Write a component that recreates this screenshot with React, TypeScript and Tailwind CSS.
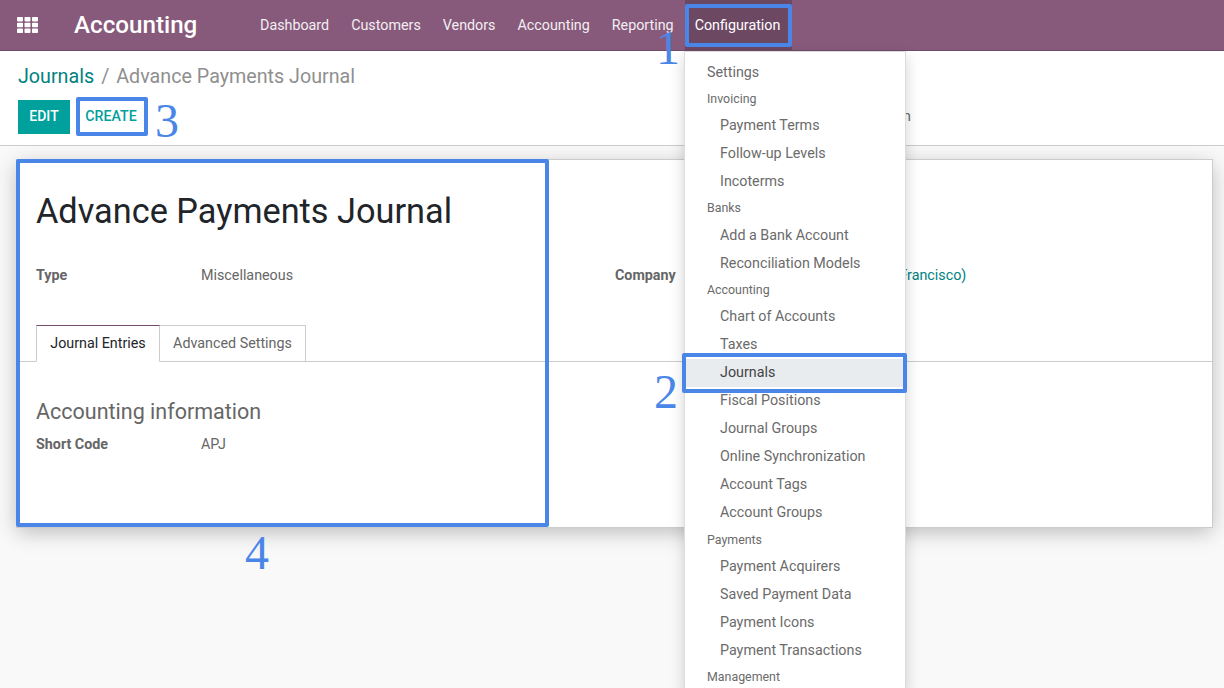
import React from "react";

const navItems = ["Dashboard", "Customers", "Vendors", "Accounting", "Reporting"];

type Row = { label: string; header?: boolean; active?: boolean; top?: boolean };
const rows: Row[] = [
  { label: "Settings", top: true },
  { label: "Invoicing", header: true },
  { label: "Payment Terms" },
  { label: "Follow-up Levels" },
  { label: "Incoterms" },
  { label: "Banks", header: true },
  { label: "Add a Bank Account" },
  { label: "Reconciliation Models" },
  { label: "Accounting", header: true },
  { label: "Chart of Accounts" },
  { label: "Taxes" },
  { label: "Journals", active: true },
  { label: "Fiscal Positions" },
  { label: "Journal Groups" },
  { label: "Online Synchronization" },
  { label: "Account Tags" },
  { label: "Account Groups" },
  { label: "Payments", header: true },
  { label: "Payment Acquirers" },
  { label: "Saved Payment Data" },
  { label: "Payment Icons" },
  { label: "Payment Transactions" },
  { label: "Management", header: true },
];

function AppsIcon() {
  const xs = [0, 7.5, 15];
  const ys = [0, 5.8, 11.6];
  return (
    <svg width="21" height="16" viewBox="0 0 21 16" className="block">
      {ys.map((y) =>
        xs.map((x) => <rect key={`${x}-${y}`} x={x} y={y} width="6" height="4.4" rx="0.8" fill="#ffffff" />)
      )}
    </svg>
  );
}

export default function App() {
  return (
    <div className="relative h-[688px] w-[1224px] overflow-hidden bg-[#f9f9f9] font-['Roboto',sans-serif] text-[14.3px] text-[#666666]">
      {/* Top navigation */}
      <header className="flex h-[51px] items-center border-b border-[#714b67] bg-[#875a7b] text-white">
        <div className="ml-[17px] w-[57px]">
          <AppsIcon />
        </div>
        <div className="w-[175px] pt-[1px] text-[24.2px] font-medium leading-none">Accounting</div>
        <nav className="flex h-full">
          {navItems.map((n) => (
            <div key={n} className="flex h-full items-center px-[11px] pt-[1px] text-[#f3eef2]">
              {n}
            </div>
          ))}
          <div className="flex h-full w-[107px] items-center bg-[#6d4863] pl-[10px] pt-[1px]">Configuration</div>
        </nav>
      </header>

      {/* Control panel */}
      <section className="relative h-[95px] border-b border-[#cccccc] bg-white pl-[18px]">
        <div className="flex h-[49px] items-center pt-[2px] text-[19.7px] leading-none">
          <span className="text-[#00827f]">Journals</span>
          <span className="mx-[7px] text-[#8f8f8f]">/</span>
          <span className="text-[#8f8f8f]">Advance Payments Journal</span>
        </div>
        <div className="flex">
          <button className="flex h-[34px] w-[52px] items-center justify-center bg-[#00a09d] pb-[1px] text-[14px] font-medium text-white">
            EDIT
          </button>
          <button className="ml-[6px] flex h-[34px] w-[70px] items-center justify-center pb-[1px] text-[14.2px] font-medium text-[#00a09d]">
            CREATE
          </button>
          <span className="ml-[724px] self-center text-[#666666]">Action</span>
        </div>
      </section>

      {/* Form sheet */}
      <main className="ml-[16px] mr-[11px] mt-[13px] h-[369px] border border-[#cccccc] bg-white shadow-[0_5px_20px_-1px_rgba(0,0,0,0.25)]">
        <h1 className="ml-[19px] mt-[28px] text-[34.3px] font-normal leading-[46px] text-[#212529]">
          Advance Payments Journal
        </h1>
        <div className="ml-[19px] mt-[31px] flex h-[22px] items-center">
          <span className="w-[165px] font-bold">Type</span>
          <span className="w-[414px]">Miscellaneous</span>
          <span className="w-[165px] font-bold">Company</span>
          <span className="text-[#00827f]">My Company (San Francisco)</span>
        </div>
        <div className="mt-[38px] flex h-[37px] border-b border-[#cccccc] pl-[19px]">
          <div className="flex h-[37px] w-[124px] items-center justify-center border-x border-b border-t border-x-[#cccccc] border-b-white border-t-[#714b67] bg-white text-[#212529]">
            Journal Entries
          </div>
          <div className="flex h-[37px] w-[146px] items-center justify-center border-y border-r border-[#cccccc] border-b-[#cccccc]">
            Advanced Settings
          </div>
        </div>
        <h2 className="ml-[19px] mt-[35px] text-[21.5px] font-normal leading-[30px]">Accounting information</h2>
        <div className="ml-[19px] mt-[7px] flex h-[22px] items-center">
          <span className="w-[165px] font-bold">Short Code</span>
          <span>APJ</span>
        </div>
      </main>

      {/* Dropdown menu */}
      <div className="absolute left-[684px] top-[51px] w-[222px] border border-[#dcdcdc] bg-white pt-[6.5px] text-[#6b6b6b] shadow-[0_6px_14px_rgba(0,0,0,0.18)]">
        {rows.map((r) =>
          r.header ? (
            <div
              key={r.label}
              className={`flex h-[25.5px] items-center pl-[22px] text-[12.4px] ${r.label === "Payments" ? "pt-[0.4px]" : ""}`}
            >
              {r.label}
            </div>
          ) : (
            <div
              key={r.label}
              className={`flex h-[28px] items-center ${r.top ? "pl-[22px]" : "pl-[35px]"} ${
                r.active ? "bg-[#e9ecef] text-[#444444]" : ""
              }`}
            >
              {r.label}
            </div>
          )
        )}
      </div>

      {/* Annotation overlays */}
      <div className="pointer-events-none absolute left-[685px] top-[4px] h-[43px] w-[107px] rounded-[2px] border-[4px] border-[#4a86e8]" />
      <div className="pointer-events-none absolute left-[682px] top-[353px] h-[40px] w-[225px] rounded-[2px] border-[4px] border-[#4a86e8]" />
      <div className="pointer-events-none absolute left-[76px] top-[97px] h-[39px] w-[72px] rounded-[2px] border-[4px] border-[#4a86e8]" />
      <div className="pointer-events-none absolute left-[16px] top-[159px] h-[368px] w-[533px] rounded-[2px] border-[4px] border-[#4a86e8]" />

      <span className="absolute left-[656px] top-[20px] font-['Liberation_Serif',serif] text-[48px] leading-[56px] text-[#4a86e8]">1</span>
      <span className="absolute left-[654px] top-[364px] font-['Liberation_Serif',serif] text-[48px] leading-[56px] text-[#4a86e8]">2</span>
      <span className="absolute left-[155px] top-[93px] font-['Liberation_Serif',serif] text-[48px] leading-[56px] text-[#4a86e8]">3</span>
      <span className="absolute left-[245px] top-[525px] font-['Liberation_Serif',serif] text-[48px] leading-[56px] text-[#4a86e8]">4</span>
    </div>
  );
}
